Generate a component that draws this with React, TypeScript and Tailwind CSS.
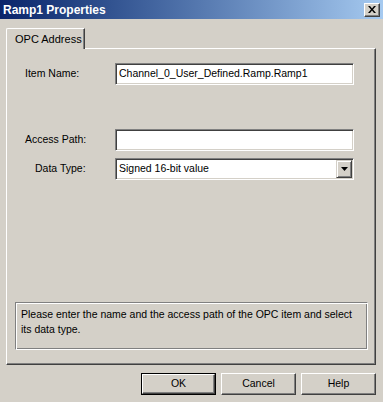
import React from "react";

const font = { fontFamily: '"Liberation Sans", Arial, sans-serif' };

function Field({ label, value, labelPad }: { label: string; value: string; labelPad: string }) {
  return (
    <div className="flex h-[22px] items-center">
      <span className={`w-[108px] ${labelPad}`}>{label}</span>
      <div className="flex h-full w-[239px] items-center border border-t-[#808080] border-l-[#808080] border-r-white border-b-white bg-white pl-[3px] shadow-[inset_1px_1px_0_#404040,inset_-1px_-1px_0_#d4d0c8]">
        {value}
      </div>
    </div>
  );
}

function Button({ label, isDefault }: { label: string; isDefault?: boolean }) {
  return (
    <button
      className={`h-[22px] w-[75px] ${isDefault ? "border border-black" : ""}`}
    >
      <div className="flex h-full w-full items-center justify-center border border-t-white border-l-white border-r-[#404040] border-b-[#404040] shadow-[inset_-1px_-1px_0_#808080]">
        {label}
      </div>
    </button>
  );
}

export default function App() {
  return (
    <div
      className="flex h-[402px] w-[383px] flex-col overflow-hidden bg-[#d4d0c8] text-[10.5px] text-black"
      style={font}
    >
      {/* title bar */}
      <div className="flex h-[19px] shrink-0 items-center justify-between bg-linear-to-r from-[#0a246a] to-[#a6caf0] pl-[3px] pr-[3px]">
        <span className="text-[12px] font-bold text-white">Ramp1 Properties</span>
        <div className="flex h-[14px] w-[16px] items-center justify-center border border-t-white border-l-white border-r-[#404040] border-b-[#404040] bg-[#d4d0c8] shadow-[inset_-1px_-1px_0_#808080]">
          <svg width="8" height="7" viewBox="0 0 8 7">
            <path d="M0 0h2l2 2.5L6 0h2L5 3.5 8 7H6L4 4.5 2 7H0l3-3.5z" fill="#000" />
          </svg>
        </div>
      </div>

      <div className="flex flex-col px-[6px] pt-[9px]">
        {/* tab */}
        <div className="relative z-10 -mb-px flex h-[21px] w-[79px] items-center rounded-tl-[2px] border-t border-l border-r border-t-white border-l-white border-r-[#404040] bg-[#d4d0c8] pl-[8px] text-[11px] shadow-[inset_-1px_0_0_#808080]">
          OPC Address
        </div>

        {/* panel */}
        <div className="flex h-[317px] w-[370px] flex-col border border-t-white border-l-white border-r-[#404040] border-b-[#404040] shadow-[inset_-1px_-1px_0_#808080]">
          <div className="mt-[14px]">
            <Field label="Item Name:" value="Channel_0_User_Defined.Ramp.Ramp1" labelPad="pl-[18px]" />
          </div>
          <div className="mt-[44px]">
            <Field label="Access Path:" value="" labelPad="pl-[18px]" />
          </div>
          <div className="mt-[7px] flex h-[22px] items-center">
            <span className="w-[108px] pl-[28px]">Data Type:</span>
            <div className="flex h-full w-[239px] items-center justify-between border border-t-[#808080] border-l-[#808080] border-r-white border-b-white bg-white pl-[3px] pr-px shadow-[inset_1px_1px_0_#404040,inset_-1px_-1px_0_#d4d0c8]">
              <span>Signed 16-bit value</span>
              <div className="flex h-[18px] w-[16px] items-center justify-center border border-t-[#d4d0c8] border-l-[#d4d0c8] border-r-[#404040] border-b-[#404040] bg-[#d4d0c8] shadow-[inset_1px_1px_0_#fff,inset_-1px_-1px_0_#808080]">
                <svg width="7" height="4" viewBox="0 0 7 4">
                  <path d="M0 0h7L3.5 4z" fill="#000" />
                </svg>
              </div>
            </div>
          </div>

          <div className="ml-[8px] mt-[122px] h-[48px] w-[353px] whitespace-nowrap border border-t-[#808080] border-l-[#808080] border-r-white border-b-white pl-[5px] pt-[4px] leading-[15px] shadow-[inset_1px_1px_0_#fff,inset_-1px_-1px_0_#808080]">
            Please enter the name and the access path of the OPC item and select
            <br />
            its data type.
          </div>
        </div>

        {/* buttons */}
        <div className="mt-[8px] flex justify-end gap-[5px] pr-px">
          <Button label="OK" isDefault />
          <Button label="Cancel" />
          <Button label="Help" />
        </div>
      </div>
    </div>
  );
}
